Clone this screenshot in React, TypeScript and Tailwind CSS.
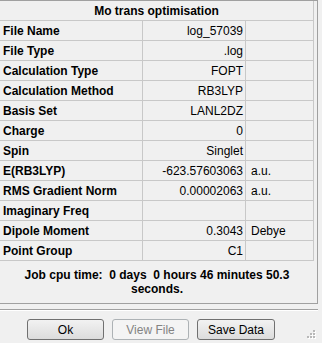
import React from 'react'

const rows: { label: string; value: string; unit?: string }[] = [
  { label: 'File Name', value: 'log_57039' },
  { label: 'File Type', value: '.log' },
  { label: 'Calculation Type', value: 'FOPT' },
  { label: 'Calculation Method', value: 'RB3LYP' },
  { label: 'Basis Set', value: 'LANL2DZ' },
  { label: 'Charge', value: '0' },
  { label: 'Spin', value: 'Singlet' },
  { label: 'E(RB3LYP)', value: '-623.57603063', unit: 'a.u.' },
  { label: 'RMS Gradient Norm', value: '0.00002063', unit: 'a.u.' },
  { label: 'Imaginary Freq', value: '' },
  { label: 'Dipole Moment', value: '0.3043', unit: 'Debye' },
  { label: 'Point Group', value: 'C1' },
]

function Grip() {
  // little dotted resize handle in the corner
  const dots = [
    [6, 0],
    [3, 3],
    [6, 3],
    [0, 6],
    [3, 6],
    [6, 6],
  ]
  return (
    <svg width="9" height="9" className="absolute right-[6px] bottom-[4px]">
      {dots.map(([x, y]) => (
        <g key={`${x}-${y}`}>
          <rect x={x + 1} y={y + 1} width="2" height="2" fill="#ffffff" />
          <rect x={x} y={y} width="2" height="2" fill="#b8b8b8" />
        </g>
      ))}
    </svg>
  )
}

export default function App() {
  return (
    <div
      className="relative w-[322px] h-[343px] overflow-hidden bg-[#f0f0f0] text-black text-[12px]"
      style={{ fontFamily: '"Liberation Sans", Arial, sans-serif' }}
    >
      {/* Results panel */}
      <div className="w-[318px] h-[304px] border-t border-r border-b border-[#a0a0a0] flex flex-col">
        <div className="w-[314px] border-r border-[#c8c8c8]">
          <div className="h-[20px] border-b border-[#c8c8c8] flex items-center justify-center font-bold">
            Mo trans optimisation
          </div>
          {rows.map((row) => (
            <div key={row.label} className="h-[20px] flex border-b border-[#c8c8c8]">
              <div className="w-[143px] border-r border-[#c8c8c8] pl-[3px] flex items-center font-bold whitespace-nowrap">
                {row.label}
              </div>
              <div className="w-[103px] border-r border-[#c8c8c8] pr-[2px] flex items-center justify-end whitespace-nowrap">
                {row.value}
              </div>
              <div className="flex-1 pl-[5px] flex items-center whitespace-nowrap">{row.unit}</div>
            </div>
          ))}
        </div>
        <div className="w-[314px] pt-[7px] leading-[14px] text-center font-bold whitespace-pre">
          {'Job cpu time:  0 days  0 hours 46 minutes 50.3\nseconds.'}
        </div>
      </div>

      {/* Separator */}
      <div className="mt-[5px] w-[318px] h-[2px] border-t border-[#a0a0a0] border-b border-b-white" />

      {/* Buttons */}
      <div className="flex gap-[8px] pl-[27px] pt-[8px]">
        <button className="w-[77px] h-[21px] rounded-[3px] border border-[#707070] bg-gradient-to-b from-[#f2f2f2] to-[#dcdcdc] text-[12px] leading-none">
          Ok
        </button>
        <button
          disabled
          className="w-[77px] h-[21px] rounded-[3px] border border-[#adb2b5] bg-[#f4f4f4] text-[#838383] text-[12px] leading-none"
        >
          View File
        </button>
        <button className="w-[78px] h-[21px] rounded-[3px] border border-[#707070] bg-gradient-to-b from-[#f2f2f2] to-[#dcdcdc] text-[12px] leading-none">
          Save Data
        </button>
      </div>

      <Grip />
    </div>
  )
}
